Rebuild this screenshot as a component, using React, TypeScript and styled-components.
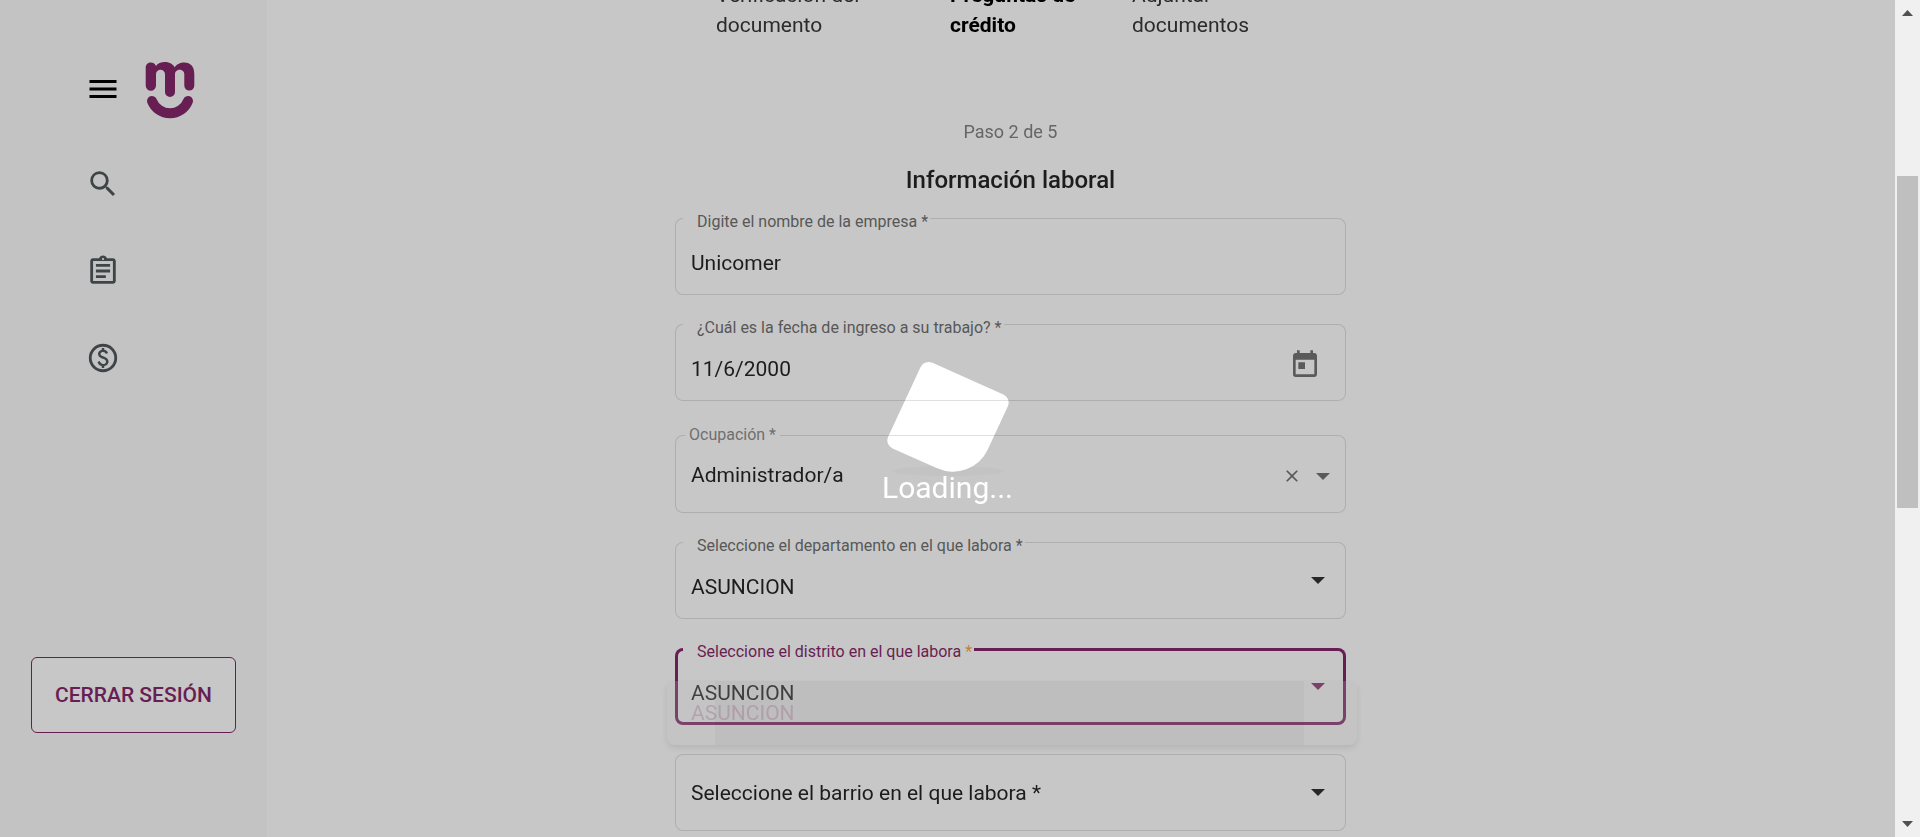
import React from "react";
import styled, { createGlobalStyle } from "styled-components";
import { MdMenu, MdSearch, MdOutlineAssignment, MdToday, MdClose } from "react-icons/md";

const color = {
  page: "#c7c7c7",
  side: "#c3c3c3",
  brand: "#671e52",
  ink: "#1c1c1c",
  label: "#575757",
  icon: "#3f4547",
  line: "rgba(0, 0, 0, 0.12)",
};

const GlobalStyle = createGlobalStyle`
  *, *::before, *::after { box-sizing: border-box; }
  body { margin: 0; background: ${color.page}; font-family: Roboto, "Liberation Sans", sans-serif; }
  button, input, select { font: inherit; color: inherit; background: none; border: 0; padding: 0; margin: 0; }
`;

const Page = styled.div`
  display: flex;
  height: 100vh;
  overflow: hidden;
  color: ${color.ink};
`;

const Sidebar = styled.aside`
  flex: 0 0 267px;
  display: flex;
  flex-direction: column;
  align-items: flex-start;
  padding: 62px 31px 104px;
  background: ${color.side};
`;

const Brand = styled.div`
  display: flex;
  align-items: flex-start;
  gap: 24px;
  height: 57px;
  padding-left: 54px;
`;

const IconButton = styled.button<{ $w: number; $h: number; $color?: string }>`
  display: flex;
  align-items: center;
  justify-content: center;
  color: ${(p) => p.$color ?? "inherit"};
  svg { width: ${(p) => p.$w}px; height: ${(p) => p.$h}px; display: block; }
`;

const MenuButton = styled(IconButton)`
  height: 54px;
`;

const Nav = styled.nav`
  display: flex;
  flex-direction: column;
  gap: 53px;
  margin: 48px 0 auto;
  padding-left: 55px;
`;

const NavLink = styled.a`
  display: block;
  height: 34px;
  color: ${color.icon};
  svg { width: 34px; height: 34px; display: block; }
`;

const LogoutButton = styled.button`
  align-self: stretch;
  height: 76px;
  border: 1px solid ${color.brand};
  border-radius: 6px;
  background: ${color.page};
  color: ${color.brand};
  font-size: 21px;
  font-weight: 500;
`;

const Main = styled.main`
  position: relative;
  z-index: 1;
  flex: 1;
  display: flex;
  flex-direction: column;
  align-items: center;
  padding-right: 141px;
`;

const Steps = styled.ol`
  display: grid;
  grid-template-columns: 234px 182px 173px;
  width: 589px;
  margin: -20px 0 0;
  padding: 0;
  list-style: none;
  font-size: 21px;
  line-height: 30px;
  color: #2b2b2b;
`;

const Step = styled.li<{ $current?: boolean }>`
  width: 150px;
  font-weight: ${(p) => (p.$current ? 700 : 400)};
  color: ${(p) => (p.$current ? "#000" : "inherit")};
`;

const StepCount = styled.p`
  margin: 80px 0 0;
  font-size: 18px;
  line-height: 24px;
  color: #666;
`;

const Title = styled.h1`
  margin: 20px 0 0;
  font-size: 24px;
  line-height: 32px;
  font-weight: 500;
`;

const Form = styled.form`
  display: flex;
  flex-direction: column;
  gap: 29px;
  width: 100%;
  max-width: 671px;
  margin-top: 22px;
`;

const Field = styled.div<{ $focused?: boolean; $spaced?: boolean }>`
  position: relative;
  flex: none;
  display: flex;
  align-items: center;
  height: ${(p) => (p.$spaced ? 78 : 77)}px;
  margin-top: ${(p) => (p.$spaced ? 5 : 0)}px;
  border-radius: 8px;
  box-shadow: inset 0 0 0 ${(p) => (p.$focused ? `3px ${color.brand}` : `1px ${color.line}`)};
  color: ${color.ink};
  font-size: 21px;
`;

const Label = styled.label<{ $focused?: boolean; $tight?: boolean }>`
  position: absolute;
  top: ${(p) => (p.$tight ? -11 : -7)}px;
  left: ${(p) => (p.$tight ? 10 : 8)}px;
  padding: 0 ${(p) => (p.$tight ? 4 : 2)}px 0 ${(p) => (p.$tight ? 4 : 14)}px;
  background: ${color.page};
  color: ${(p) => (p.$focused ? color.brand : p.$tight ? "#6f6f6f" : color.label)};
  font-size: 16px;
  line-height: 22px;
  white-space: nowrap;
`;

const Required = styled.span`
  color: #c58232;
`;

const control = `
  flex: 1;
  min-width: 0;
  width: 100%;
  height: 100%;
  outline: none;
`;

const TextInput = styled.input<{ $tight?: boolean }>`
  ${control}
  && { padding: ${(p) => (p.$tight ? 2 : 12)}px 16px 0; }
`;

const Select = styled.select<{ $empty?: boolean }>`
  ${control}
  appearance: none;
  && { padding: ${(p) => (p.$empty ? 0 : 12)}px 56px 0 16px; }
`;

const Adornment = styled.div<{ $wide?: boolean }>`
  flex: none;
  display: flex;
  align-items: center;
  gap: 14px;
  padding: 4px ${(p) => (p.$wide ? 25 : 16)}px 0 0;
  color: #5a5a5a;
`;

const SelectArrow = styled.span<{ $focused?: boolean }>`
  position: absolute;
  right: 21px;
  top: 35px;
  display: flex;
  pointer-events: none;
  color: ${(p) => (p.$focused ? color.brand : "#262828")};
`;

const Options = styled.ul`
  position: absolute;
  z-index: 2;
  left: -8px;
  right: -11px;
  top: 33px;
  height: 64px;
  margin: 0;
  padding: 17px 24px;
  list-style: none;
  border-radius: 8px;
  background: linear-gradient(rgba(0, 0, 0, 0.03), rgba(0, 0, 0, 0.03)) 48px 0 / 589px 100% no-repeat,
    rgba(185, 185, 185, 0.23);
  box-shadow: 0 3px 6px rgba(0, 0, 0, 0.09);
  color: rgba(150, 100, 135, 0.35);
  font-size: 21px;
  line-height: 30px;
`;

const Overlay = styled.div`
  position: fixed;
  inset: 0 25px 0 0;
  display: flex;
  flex-direction: column;
  align-items: center;
  justify-content: center;
  padding-top: 29px;
  pointer-events: none;
`;

const CubeBox = styled.div`
  height: 109px;
  svg { display: block; }
`;

const LoadingText = styled.p`
  position: relative;
  margin: 0;
  color: #fff;
  font-size: 30px;
  line-height: 36px;
`;

const Scrollbar = styled.div`
  flex: 0 0 25px;
  display: flex;
  flex-direction: column;
  align-items: center;
  justify-content: space-between;
  padding: 10px 0;
  background: #f0f0f0;
  color: #505050;
  svg { display: block; }
`;

const Track = styled.div`
  flex: 1;
  width: 21px;
  padding: 160px 0;
`;

const Thumb = styled.div`
  height: 332px;
  background: #bfbfbf;
`;

const Triangle = ({ w = 14, h = 7, up = false }: { w?: number; h?: number; up?: boolean }) => (
  <svg width={w} height={h} viewBox="0 0 14 7" preserveAspectRatio="none" aria-hidden="true">
    <path d={up ? "M0 7L7 0l7 7z" : "M0 0h14L7 7z"} fill="currentColor" />
  </svg>
);

const Logo = () => (
  <svg width="50" height="57" viewBox="0 0 50 57" role="img" aria-label="Logo">
    <path
      fill={color.brand}
      d="M.7 6C.7-.6 9-1 11 4 14-.8 25.500-2 29.800 5.400 32.500-.5 49.300-3.500 49.300 12v11.600a5 5 0 0 1-10 0V12.200c0-6-9.300-6-9.300 0V30a5 5 0 0 1-10 0V12.200c0-6-9-6-9 0v11.400a5.150 5.150 0 0 1-10.300 0z"
    />
    <path d="M7 39a19.300 19.300 0 0 0 36 0" fill="none" stroke={color.brand} strokeWidth="10" strokeLinecap="round" />
  </svg>
);

const CoinIcon = () => (
  <svg viewBox="0 0 24 24" aria-hidden="true">
    <circle cx="12" cy="12" r="9" fill="none" stroke="currentColor" strokeWidth="2" />
    <path
      fill="currentColor"
      d="M12.890 11.100c-1.780-.590-2.640-.960-2.640-1.900 0-1.020 1.110-1.390 1.810-1.390 1.310 0 1.790.990 1.900 1.340l1.580-.670c-.150-.440-.820-1.910-2.660-2.230V5h-1.750v1.260c-2.600.560-2.620 2.850-2.620 2.960 0 2.270 2.250 2.910 3.350 3.310 1.580.560 2.280 1.070 2.280 2.030 0 1.130-1.050 1.610-1.980 1.610-1.820 0-2.340-1.870-2.400-2.090l-1.660.670c.630 2.190 2.280 2.780 3.020 2.960V19h1.750v-1.240c.520-.090 3.020-.590 3.020-3.220.010-1.390-.600-2.610-3-3.440z"
    />
  </svg>
);

const Cube = () => (
  <svg width="124" height="116" viewBox="0 0 124 116" aria-hidden="true">
    <ellipse cx="62" cy="110" rx="56" ry="5" fill="#000" fillOpacity="0.02" />
    <g transform="translate(62 60.500) scale(1 .98) rotate(24.500)">
      <path
        fill="#fff"
        d="M-39-48h78a9 9 0 0 1 9 9v49a38 38 0 0 1-38 38h-49a9 9 0 0 1-9-9v-78a9 9 0 0 1 9-9z"
      />
    </g>
  </svg>
);

export default function App() {
  return (
    <>
      <GlobalStyle />
      <Page>
        <Sidebar>
          <Brand>
            <MenuButton type="button" aria-label="Menú" $w={36} $h={36} $color="#000">
              <MdMenu />
            </MenuButton>
            <Logo />
          </Brand>
          <Nav aria-label="Principal">
            <NavLink href="#buscar" aria-label="Buscar"><MdSearch /></NavLink>
            <NavLink href="#solicitudes" aria-label="Solicitudes"><MdOutlineAssignment /></NavLink>
            <NavLink href="#pagos" aria-label="Pagos"><CoinIcon /></NavLink>
          </Nav>
          <LogoutButton type="button">CERRAR SESIÓN</LogoutButton>
        </Sidebar>

        <Main>
          <Steps>
            <Step>Verificación del documento</Step>
            <Step $current aria-current="step">Preguntas de crédito</Step>
            <Step>Adjuntar documentos</Step>
          </Steps>
          <StepCount>Paso 2 de 5</StepCount>
          <Title>Información laboral</Title>

          <Form>
            <Field>
              <TextInput id="empresa" defaultValue="Unicomer" />
              <Label htmlFor="empresa">Digite el nombre de la empresa *</Label>
            </Field>

            <Field>
              <TextInput id="fecha" defaultValue="11/6/2000" />
              <Label htmlFor="fecha">¿Cuál es la fecha de ingreso a su trabajo? *</Label>
              <Adornment $wide>
                <IconButton type="button" aria-label="Abrir calendario" $w={32} $h={32}>
                  <MdToday />
                </IconButton>
              </Adornment>
            </Field>

            <Field $spaced>
              <TextInput id="ocupacion" $tight defaultValue="Administrador/a" />
              <Label htmlFor="ocupacion" $tight>Ocupación *</Label>
              <Adornment>
                <IconButton type="button" aria-label="Limpiar" $w={20} $h={20}>
                  <MdClose />
                </IconButton>
                <IconButton type="button" aria-label="Mostrar opciones" $w={14} $h={7}>
                  <Triangle />
                </IconButton>
              </Adornment>
            </Field>

            <Field>
              <Select id="departamento" defaultValue="ASUNCION">
                <option>ASUNCION</option>
              </Select>
              <Label htmlFor="departamento">Seleccione el departamento en el que labora *</Label>
              <SelectArrow><Triangle /></SelectArrow>
            </Field>

            <Field $focused>
              <Select id="distrito" defaultValue="ASUNCION">
                <option>ASUNCION</option>
              </Select>
              <Label htmlFor="distrito" $focused>
                Seleccione el distrito en el que labora <Required>*</Required>
              </Label>
              <SelectArrow $focused><Triangle /></SelectArrow>
              <Options>
                <li>ASUNCION</li>
              </Options>
            </Field>

            <Field>
              <Select $empty aria-label="Seleccione el barrio en el que labora" defaultValue="">
                <option value="">Seleccione el barrio en el que labora *</option>
              </Select>
              <SelectArrow><Triangle /></SelectArrow>
            </Field>
          </Form>
        </Main>

        <Overlay role="status">
          <CubeBox>
            <Cube />
          </CubeBox>
          <LoadingText>Loading...</LoadingText>
        </Overlay>

        <Scrollbar aria-hidden="true">
          <Triangle w={11} h={6} up />
          <Track><Thumb /></Track>
          <Triangle w={11} h={6} />
        </Scrollbar>
      </Page>
    </>
  );
}
